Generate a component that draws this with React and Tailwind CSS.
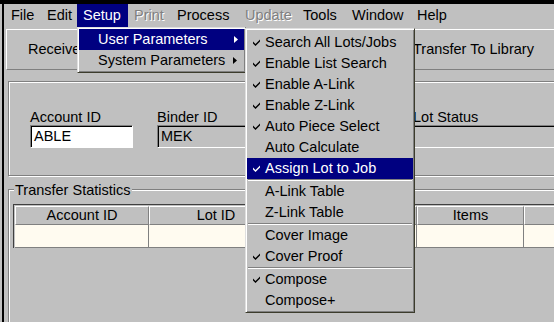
const menuBar = [
  { label: "File", w: "w-[36px]" },
  { label: "Edit", w: "w-[36px]" },
  { label: "Setup", w: "w-[51px]", open: true },
  { label: "Print", w: "w-[43px]", disabled: true },
  { label: "Process", w: "w-[68px]" },
  { label: "Update", w: "w-[58px]", disabled: true },
  { label: "Tools", w: "w-[49px]" },
  { label: "Window", w: "w-[65px]" },
  { label: "Help", w: "w-[40px]" },
];

const userParams = [
  { label: "Search All Lots/Jobs", check: true },
  { label: "Enable List Search", check: true },
  { label: "Enable A-Link", check: true },
  { label: "Enable Z-Link", check: true },
  { label: "Auto Piece Select", check: true },
  { label: "Auto Calculate" },
  { label: "Assign Lot to Job", check: true, active: true },
  { sep: true },
  { label: "A-Link Table" },
  { label: "Z-Link Table" },
  { sep: true },
  { label: "Cover Image" },
  { label: "Cover Proof", check: true },
  { sep: true },
  { label: "Compose", check: true },
  { label: "Compose+" },
];

// the third column sits under the open menu and the last runs off screen
const columns = [
  { key: "acct", label: "Account ID", w: "w-[134px]" },
  { key: "lot", label: "Lot ID", w: "w-[134px]" },
  { key: "hidden", label: "", w: "w-[134px]" },
  { key: "items", label: "Items", w: "w-[107px]" },
  { key: "more", label: "", w: "w-[136px]" },
];

const CheckMark = () => (
  <svg width="7" height="7" viewBox="0 0 7 7" className="block">
    <path d="M0 2.5L2.5 5L7 0.5V2.5L2.5 7L0 4.5Z" fill="currentColor" />
  </svg>
);

const Arrow = () => (
  <svg width="4" height="7" viewBox="0 0 4 7" className="block">
    <path d="M0 0L4 3.5L0 7Z" fill="currentColor" />
  </svg>
);

const raised =
  "border border-t-white border-l-white border-r-[#808080] border-b-[#808080]";
const menuFrame =
  "border border-t-[#dfdfdf] border-l-[#dfdfdf] border-r-[#3c3c2c] border-b-[#3c3c2c] shadow-[inset_1px_1px_0_#fff,inset_-1px_-1px_0_#808080] p-[1px]";
const sunken =
  "h-[23px] border border-t-[#808080] border-l-[#808080] border-r-white border-b-white shadow-[inset_1px_1px_0_#000] flex items-center pl-[3px]";

export default function App() {
  return (
    <div className="relative w-[554px] h-[322px] overflow-hidden bg-[#c0c0c0] font-['Liberation_Sans',Arial,sans-serif] text-[14.5px] text-black">
      <div className="h-[4px] bg-black" />
      <div className="ml-[2px] border-l-2 border-black h-[318px]">
        {/* Menu bar */}
        <div className="flex h-[23px]">
          {menuBar.map((m, i) => (
            <div
              key={m.label}
              className={`${m.w} ${i === 0 ? "ml-[1px]" : ""} shrink-0 flex items-center pl-[6px] ${
                m.open ? "bg-[#000080] text-white" : ""
              } ${m.disabled ? "text-[#808080] [text-shadow:1px_1px_0_#fff]" : ""}`}
            >
              {m.label}
            </div>
          ))}
        </div>

        {/* Toolbar buttons */}
        <div className="flex pt-[2px]">
          <div className={`ml-[2px] w-[150px] h-[41px] shrink-0 ${raised} flex items-center pl-[21px]`}>
            Receive Lot
          </div>
          <div className={`ml-[244px] w-[200px] h-[41px] shrink-0 ${raised} flex items-center pl-[12px]`}>
            Transfer To Library
          </div>
        </div>

        {/* Lot group */}
        <div className="ml-[4px] mt-[11px] w-[600px] h-[95px] border border-[#808080] shadow-[inset_1px_1px_0_#fff,1px_1px_0_#fff] pt-[28px] flex">
          <div className="ml-[21px] w-[103px] shrink-0">
            <div className="leading-[15px] h-[15px]">Account ID</div>
            <div className={`${sunken} bg-white`}>ABLE</div>
          </div>
          <div className="ml-[24px] w-[220px] shrink-0">
            <div className="leading-[15px] h-[15px]">Binder ID</div>
            <div className={sunken}>MEK</div>
          </div>
          <div className="ml-[35px] w-[200px] shrink-0">
            <div className="leading-[15px] h-[15px] pl-[1px]">Lot Status</div>
            <div className={sunken} />
          </div>
        </div>

        {/* Transfer Statistics group */}
        <div className="relative ml-[4px] mt-[13px] w-[600px] h-[200px] border border-[#808080] shadow-[inset_1px_1px_0_#fff] pt-[14px] pl-[4px]">
          <span className="absolute left-[5px] -top-[8px] bg-[#c0c0c0] px-[1px] leading-[16px]">
            Transfer Statistics
          </span>
          <div className="border-t border-l border-[#404040] pt-[1px] pl-[1px]">
            <div className="flex h-[19px]">
              {columns.map((c) => (
                <div key={c.key} className={`${c.w} shrink-0 ${raised} flex items-center justify-center`}>
                  {c.label}
                </div>
              ))}
            </div>
            <div className="flex h-[23px] bg-[#fffbf0] border-b border-[#808080] w-max">
              {columns.map((c) => (
                <div key={c.key} className={`${c.w} shrink-0 border-r border-[#808080]`} />
              ))}
            </div>
          </div>
        </div>
      </div>

      {/* Setup dropdown */}
      <div className={`absolute left-[77px] top-[27px] w-[169px] bg-[#c0c0c0] ${menuFrame}`}>
        <div className="h-[21px] flex items-center justify-between pl-[19px] pr-[6px] bg-[#000080] text-white">
          <span>User Parameters</span>
          <Arrow />
        </div>
        <div className="h-[21px] flex items-center justify-between pl-[19px] pr-[7px]">
          <span>System Parameters</span>
          <Arrow />
        </div>
      </div>

      {/* User Parameters submenu */}
      <div className={`absolute left-[245px] top-[28px] w-[170px] bg-[#c0c0c0] pt-[3px] ${menuFrame}`}>
        {userParams.map((it, i) =>
          it.sep ? (
            <div key={i} className="h-[2px] border-t border-[#808080] border-b border-b-white mx-[1px]" />
          ) : (
            <div
              key={i}
              className={`h-[21px] flex items-center pl-[6px] ${
                it.active ? "bg-[#000080] text-white" : ""
              }`}
            >
              <span className="w-[7px] shrink-0">{it.check && <CheckMark />}</span>
              <span className="ml-[5px]">{it.label}</span>
            </div>
          )
        )}
      </div>
    </div>
  );
}
